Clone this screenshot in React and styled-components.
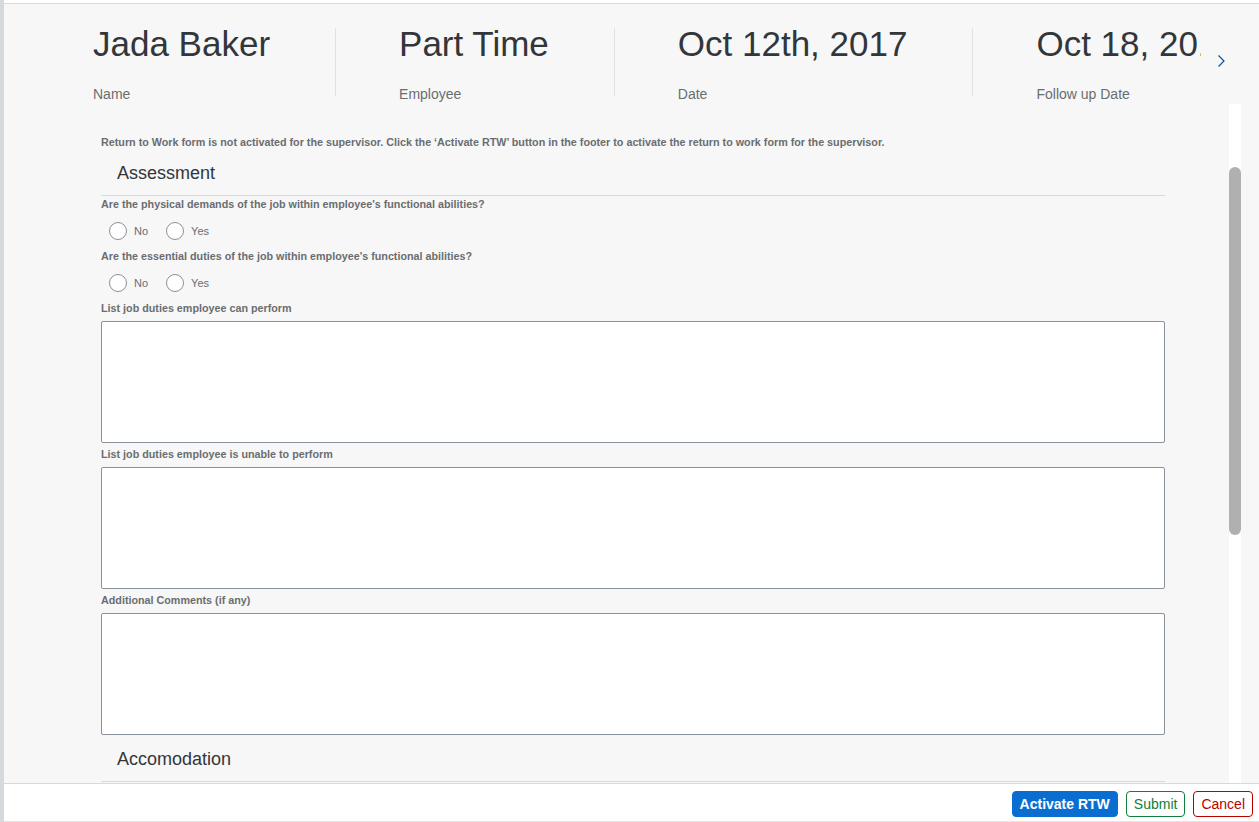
import React, { useLayoutEffect, useRef, useState } from 'react'
import styled, { createGlobalStyle } from 'styled-components'

const GlobalStyle = createGlobalStyle`
    html, body {
        margin: 0;
        padding: 0;
        height: 100%;
        background: #f7f7f7;
        font-family: "Liberation Sans", Arial, sans-serif;
    }
    #root {
        height: 100%;
    }
`

const headerItems = [
    { value: 'Jada Baker', label: 'Name' },
    { value: 'Part Time', label: 'Employee' },
    { value: 'Oct 12th, 2017', label: 'Date' },
    { value: 'Oct 18, 2017', label: 'Follow up Date' },
]

function RadioGroup({ name }) {
    return (
        <RadioRow>
            <RadioOption>
                <Radio type="radio" name={name} />
                <RadioText>No</RadioText>
            </RadioOption>
            <RadioOption>
                <Radio type="radio" name={name} />
                <RadioText>Yes</RadioText>
            </RadioOption>
        </RadioRow>
    )
}

function App() {
    const scrollRef = useRef(null)
    const [thumb, setThumb] = useState({ top: 0, height: 0 })

    const measure = () => {
        const el = scrollRef.current
        if (!el) return
        const track = el.clientHeight
        setThumb({
            top: (el.scrollTop * track) / el.scrollHeight,
            height: (track * track) / el.scrollHeight,
        })
    }

    useLayoutEffect(() => {
        if (scrollRef.current) scrollRef.current.scrollTop = 116
        measure()
    }, [])

    return (
        <Frame>
            <GlobalStyle />
            <SideStrip />
            <Main>
                <TopBand />
                <Header>
                    <HeaderViewport>
                        {headerItems.map((item, i) => (
                            <React.Fragment key={item.label}>
                                {i > 0 && <Divider />}
                                <HeaderItem first={i === 0}>
                                    <HeaderValue>{item.value}</HeaderValue>
                                    <HeaderLabel>{item.label}</HeaderLabel>
                                </HeaderItem>
                            </React.Fragment>
                        ))}
                    </HeaderViewport>
                    <NextArrow>
                        <svg width="9" height="14" viewBox="0 0 9 14">
                            <polyline points="1.5,1.5 7,7 1.5,12.5" fill="none" stroke="#0854a0" strokeWidth="1.2" />
                        </svg>
                    </NextArrow>
                </Header>

                <Body>
                    <ScrollArea ref={scrollRef} onScroll={measure}>
                        <Form>
                            <Message>
                                Return to Work form is not activated for the supervisor. Click the ‘Activate RTW’ button in the footer to activate the return to work form for the supervisor.
                            </Message>

                            <SectionTitle>Assessment</SectionTitle>
                            <FieldLabel>Are the physical demands of the job within employee's functional abilities?</FieldLabel>
                            <RadioGroup name="physical" />
                            <FieldLabel>Are the essential duties of the job within employee's functional abilities?</FieldLabel>
                            <RadioGroup name="essential" />

                            <FieldLabel>List job duties employee can perform</FieldLabel>
                            <TextBox />
                            <FieldLabel spaced>List job duties employee is unable to perform</FieldLabel>
                            <TextBox />
                            <FieldLabel spaced>Additional Comments (if any)</FieldLabel>
                            <TextBox />

                            <SectionTitle>Accomodation</SectionTitle>
                            <FieldLabel>Is modified duty available for the employee?</FieldLabel>
                            <RadioGroup name="modified" />
                            <FieldLabel>Describe the accommodation offered</FieldLabel>
                            <TextBox />
                            <FieldLabel spaced>Restrictions</FieldLabel>
                            <TextBox />
                        </Form>
                    </ScrollArea>
                    <ScrollTrack>
                        <ScrollThumb style={{ top: thumb.top, height: thumb.height }} />
                    </ScrollTrack>
                    <Gutter />
                </Body>

                <Footer>
                    <PrimaryButton>Activate RTW</PrimaryButton>
                    <OutlineButton tone="#107e3e">Submit</OutlineButton>
                    <OutlineButton tone="#bb0000">Cancel</OutlineButton>
                </Footer>
            </Main>
        </Frame>
    )
}

export default App

const Frame = styled.div`
    display: flex;
    height: 100vh;
    overflow: hidden;
`
const SideStrip = styled.div`
    width: 4px;
    flex-shrink: 0;
    background: #d6d9db;
`
const Main = styled.div`
    flex: 1;
    min-width: 0;
    display: flex;
    flex-direction: column;
`
const TopBand = styled.div`
    height: 3px;
    flex-shrink: 0;
    background: #ffffff;
    border-bottom: 1px solid #dadada;
`
const Header = styled.div`
    height: 100px;
    flex-shrink: 0;
    display: flex;
    background: #f7f7f7;
`
const HeaderViewport = styled.div`
    width: 1197px;
    flex-shrink: 0;
    overflow: hidden;
    display: flex;
    align-items: flex-start;
    padding: 20px 0 0 89px;
    box-sizing: border-box;
`
const HeaderItem = styled.div`
    flex-shrink: 0;
    display: flex;
    flex-direction: column;
    padding: 0 65px 0 ${p => (p.first ? '0' : '63px')};
`
const HeaderValue = styled.div`
    font-size: 35px;
    line-height: 40px;
    color: #32363a;
    white-space: nowrap;
`
const HeaderLabel = styled.div`
    margin-top: 21px;
    font-size: 14px;
    line-height: 18px;
    color: #6a6d70;
    white-space: nowrap;
`
const Divider = styled.div`
    flex-shrink: 0;
    width: 1px;
    height: 68px;
    margin-top: 4px;
    background: #e2e2e2;
`
const NextArrow = styled.div`
    display: flex;
    align-items: center;
    justify-content: center;
    width: 40px;
    height: 14px;
    margin-top: 50px;
`
const Body = styled.div`
    flex: 1;
    min-height: 0;
    display: flex;
`
const ScrollArea = styled.div`
    flex: 1;
    min-width: 0;
    overflow-y: auto;
    scrollbar-width: none;
    background: #f7f7f7;
`
const ScrollTrack = styled.div`
    position: relative;
    width: 12px;
    flex-shrink: 0;
    background: #ffffff;
`
const ScrollThumb = styled.div`
    position: absolute;
    left: 0;
    right: 0;
    background: #b0b0b0;
    border-radius: 6px;
`
const Gutter = styled.div`
    width: 18px;
    flex-shrink: 0;
`
const Form = styled.div`
    display: flex;
    flex-direction: column;
    padding: 147px 64px 118px 97px;
`
const Message = styled.p`
    margin: 0;
    font-size: 10.75px;
    line-height: 14px;
    font-weight: 700;
    color: #6a6d70;
`
const SectionTitle = styled.h3`
    margin: 2px 0 0;
    height: 45px;
    box-sizing: border-box;
    display: flex;
    align-items: center;
    padding-left: 16px;
    font-size: 18px;
    font-weight: 400;
    color: #32363a;
    border-bottom: 1px solid #d9d9d9;
`
const FieldLabel = styled.label`
    display: block;
    margin-top: ${p => (p.spaced ? '3px' : '0')};
    font-size: 10.75px;
    line-height: 16px;
    font-weight: 700;
    color: #6a6d70;
`
const RadioRow = styled.div`
    display: flex;
    align-items: center;
    height: 34px;
    padding: 2px 0 0 8px;
    gap: 18px;
`
const RadioOption = styled.span`
    display: flex;
    align-items: center;
    gap: 7px;
`
const Radio = styled.input`
    appearance: none;
    margin: 0;
    width: 18px;
    height: 18px;
    border: 1px solid #89919a;
    border-radius: 50%;
    background: #ffffff;
    box-sizing: border-box;
`
const RadioText = styled.span`
    font-size: 11px;
    color: #6a6d70;
`
const TextBox = styled.textarea`
    display: block;
    margin-top: 5px;
    height: 122px;
    box-sizing: border-box;
    border: 1px solid #89919a;
    border-radius: 2px;
    background: #ffffff;
    resize: none;
    font-family: inherit;
`
const Footer = styled.div`
    flex-shrink: 0;
    display: flex;
    justify-content: flex-end;
    align-items: flex-start;
    gap: 8px;
    padding: 7px 6px 4px;
    background: #ffffff;
    border-top: 1px solid #d9d9d9;
    border-bottom: 1px solid #e4e4e4;
`
const PrimaryButton = styled.button`
    height: 26px;
    padding: 0 7px;
    border: 1px solid #0a6ed1;
    border-radius: 4px;
    background: #0a6ed1;
    color: #ffffff;
    font-family: inherit;
    font-size: 14px;
    font-weight: 700;
`
const OutlineButton = styled.button`
    height: 26px;
    padding: 0 7px;
    border: 1px solid ${p => p.tone};
    border-radius: 4px;
    background: #ffffff;
    color: ${p => p.tone};
    font-family: inherit;
    font-size: 14px;
`
